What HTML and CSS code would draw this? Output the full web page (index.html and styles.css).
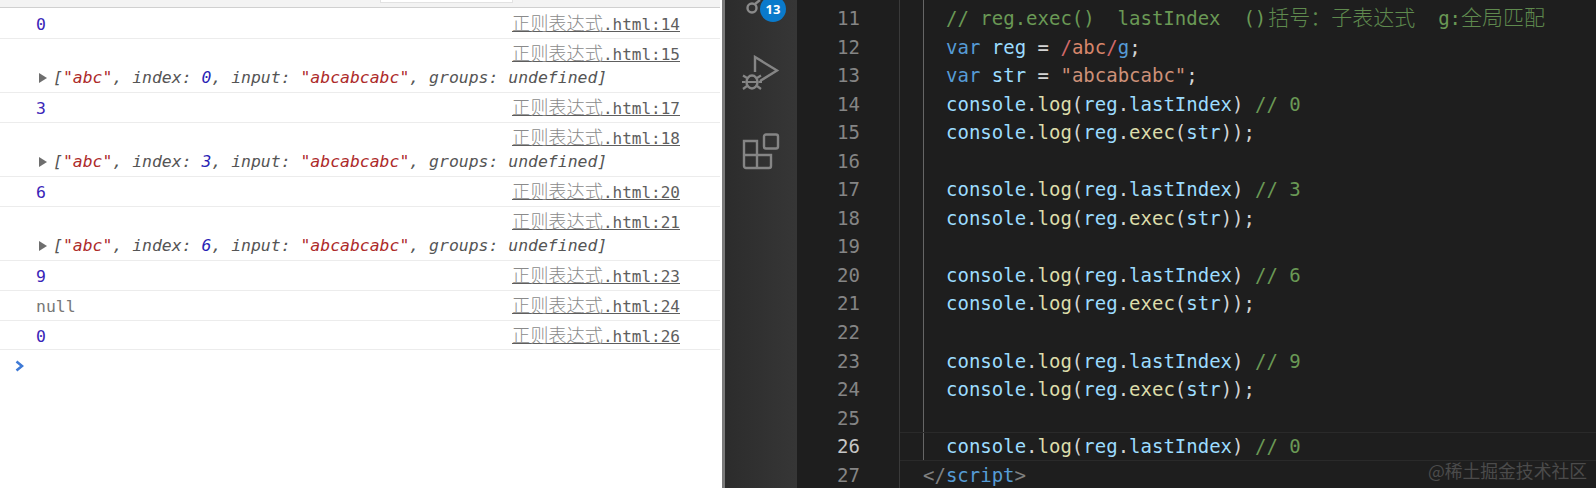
FILE: index.html
```html
<!DOCTYPE html>
<html lang="zh">
<head>
<meta charset="utf-8">
<title>正则表达式</title>
<link rel="stylesheet" href="styles.css">
</head>
<body>
<div class="app">
  <section class="console">
    <div class="toolbar"><div class="tab-edge"></div></div>
    <div class="row"><div class="line"><span class="num">0</span><a class="src"><span class="cjk">正则表达式</span>.html:14</a></div></div>
    <div class="row double">
      <div class="line end"><a class="src"><span class="cjk">正则表达式</span>.html:15</a></div>
      <div class="obj"><span class="tri"></span><i>[<b class="s">"abc"</b>, index: <b class="n">0</b>, input: <b class="s">"abcabcabc"</b>, groups: undefined]</i></div>
    </div>
    <div class="row"><div class="line"><span class="num">3</span><a class="src"><span class="cjk">正则表达式</span>.html:17</a></div></div>
    <div class="row double">
      <div class="line end"><a class="src"><span class="cjk">正则表达式</span>.html:18</a></div>
      <div class="obj"><span class="tri"></span><i>[<b class="s">"abc"</b>, index: <b class="n">3</b>, input: <b class="s">"abcabcabc"</b>, groups: undefined]</i></div>
    </div>
    <div class="row"><div class="line"><span class="num">6</span><a class="src"><span class="cjk">正则表达式</span>.html:20</a></div></div>
    <div class="row double">
      <div class="line end"><a class="src"><span class="cjk">正则表达式</span>.html:21</a></div>
      <div class="obj"><span class="tri"></span><i>[<b class="s">"abc"</b>, index: <b class="n">6</b>, input: <b class="s">"abcabcabc"</b>, groups: undefined]</i></div>
    </div>
    <div class="row"><div class="line"><span class="num">9</span><a class="src"><span class="cjk">正则表达式</span>.html:23</a></div></div>
    <div class="row"><div class="line"><span class="null">null</span><a class="src"><span class="cjk">正则表达式</span>.html:24</a></div></div>
    <div class="row last"><div class="line"><span class="num">0</span><a class="src"><span class="cjk">正则表达式</span>.html:26</a></div></div>
    <div class="prompt">
      <svg width="9" height="12" viewBox="0 0 9 12"><path d="M1.500 1.500 7 6l-5.500 4.500" fill="none" stroke="#3f7ad6" stroke-width="2.600"/></svg>
    </div>
  </section>
  <div class="divider"></div>
  <nav class="activity">
    <svg class="ic-scm" width="30" height="16" viewBox="0 0 30 16"><circle cx="9" cy="8" r="4.500" fill="none" stroke="#8a8a8a" stroke-width="2.400"/><path d="M12 4 17 0" stroke="#8a8a8a" stroke-width="2.400" fill="none"/></svg>
    <span class="badge">13</span>
    <svg class="ic-debug" width="38" height="38" viewBox="0 0 38 38">
      <path d="M13 17V2l22 13.500L18 26" fill="none" stroke="#858585" stroke-width="2.400" stroke-linejoin="miter"/>
      <ellipse cx="10" cy="27" rx="5.500" ry="6.500" fill="none" stroke="#858585" stroke-width="2.400"/>
      <path d="M5 23 1 20.500M15 23l4-2.500M3.500 27H0M16.500 27H20M5 31l-4 3M15 31l4 3M5 27h10" fill="none" stroke="#858585" stroke-width="2.200"/>
    </svg>
    <svg class="ic-ext" width="38" height="38" viewBox="0 0 38 38">
      <path d="M2 8h13v27H4a2 2 0 0 1-2-2zM2 22h27v11a2 2 0 0 1-2 2H15V8" fill="none" stroke="#858585" stroke-width="2.400"/>
      <rect x="22" y="1.500" width="14" height="14" rx="2" fill="none" stroke="#858585" stroke-width="2.400"/>
    </svg>
  </nav>
  <main class="editor">
    <div class="gutter">
      <div>11</div><div>12</div><div>13</div><div>14</div><div>15</div><div>16</div><div>17</div><div>18</div><div>19</div><div>20</div><div>21</div><div>22</div><div>23</div><div>24</div><div>25</div><div class="cur">26</div><div>27</div>
    </div>
    <div class="code">
      <div class="guide">
        <div class="c"><span class="cm">// reg.exec()  lastIndex  ()<span class="zh first">括号：子表达式</span>  g:<span class="zh">全局匹配</span></span></div>
        <div class="c"><span class="kw">var</span> <span class="v">reg</span> = <span class="re">/</span><span class="rb">abc</span><span class="re">/</span><span class="kw">g</span>;</div>
        <div class="c"><span class="kw">var</span> <span class="v">str</span> = <span class="st">"abcabcabc"</span>;</div>
        <div class="c"><span class="v">console</span>.<span class="fn">log</span>(<span class="v">reg</span>.<span class="v">lastIndex</span>) <span class="cm">// 0</span></div>
        <div class="c"><span class="v">console</span>.<span class="fn">log</span>(<span class="v">reg</span>.<span class="fn">exec</span>(<span class="v">str</span>));</div>
        <div class="c"></div>
        <div class="c"><span class="v">console</span>.<span class="fn">log</span>(<span class="v">reg</span>.<span class="v">lastIndex</span>) <span class="cm">// 3</span></div>
        <div class="c"><span class="v">console</span>.<span class="fn">log</span>(<span class="v">reg</span>.<span class="fn">exec</span>(<span class="v">str</span>));</div>
        <div class="c"></div>
        <div class="c"><span class="v">console</span>.<span class="fn">log</span>(<span class="v">reg</span>.<span class="v">lastIndex</span>) <span class="cm">// 6</span></div>
        <div class="c"><span class="v">console</span>.<span class="fn">log</span>(<span class="v">reg</span>.<span class="fn">exec</span>(<span class="v">str</span>));</div>
        <div class="c"></div>
        <div class="c"><span class="v">console</span>.<span class="fn">log</span>(<span class="v">reg</span>.<span class="v">lastIndex</span>) <span class="cm">// 9</span></div>
        <div class="c"><span class="v">console</span>.<span class="fn">log</span>(<span class="v">reg</span>.<span class="fn">exec</span>(<span class="v">str</span>));</div>
        <div class="c"></div>
        <div class="c active"><span class="v">console</span>.<span class="fn">log</span>(<span class="v">reg</span>.<span class="v">lastIndex</span>) <span class="cm">// 0</span></div>
      </div>
      <div class="c closing"><span class="tg">&lt;/</span><span class="kw">script</span><span class="tg">&gt;</span></div>
    </div>
    <div class="mark">@稀土掘金技术社区</div>
  </main>
</div>
</body>
</html>
```
FILE: styles.css
```css
* { box-sizing: border-box; }
html, body { margin: 0; height: 488px; overflow: hidden; background: #fff; }
.app { display: flex; width: 1596px; height: 488px; }

/* console */
.console {
  width: 722px;
  flex: none;
  background: #fff;
  padding-right: 2px;
  font: 16.450px/23px "DejaVu Sans Mono", monospace;
  color: #555;
}
.toolbar {
  height: 8px;
  background: #f3f3f3;
  border-bottom: 1px solid #d0d0d0;
  padding-left: 380px;
}
.tab-edge { width: 133px; height: 3px; background: #fff; border: 1px solid #e2e2e2; border-top: 0; }
.row { padding: 3px 0 3px 36px; border-bottom: 1px solid #ececec; }
.toolbar + .row { padding-top: 4px; }
.row.last { padding-bottom: 2px; }
.row.double { display: flex; flex-direction: column; gap: 1px; }
.line { display: flex; justify-content: space-between; padding-right: 40px; height: 23px; }
.line.end { justify-content: flex-end; }
.num { color: #3a25b8; margin-top: 1px; }
.null { color: #777; margin-top: 1px; }
.src { color: #5e5e5e; text-decoration: underline; font-size: 16px; margin-top: -1px; }
.cjk { font-family: "Noto Sans CJK SC", sans-serif; font-size: 18.200px; color: #8a8a8a; font-weight: 300; }
.obj { display: flex; align-items: center; height: 23px; margin-left: 3px; }
.obj i { font-style: italic; color: #555; margin-left: 6px; }
.obj b { font-weight: normal; }
.s { color: #ad2a2a; }
.n { color: #2a1fb5; }
.tri { width: 0; height: 0; border-left: 8px solid #6e6e6e; border-top: 5.500px solid transparent; border-bottom: 5.500px solid transparent; }
.prompt { padding: 10px 0 0 15px; line-height: 0; }

/* divider + activity bar */
.divider { width: 3px; flex: none; background: #7a7a7a; }
.activity {
  width: 72px;
  flex: none;
  position: relative;
  background: linear-gradient(90deg, #2c2c2c, #363636);
}
.ic-scm { position: absolute; left: 18px; top: 0; }
.badge {
  position: absolute; left: 35px; top: -4px;
  width: 26px; height: 26px; border-radius: 50%;
  background: #0a7acb; color: #fff;
  font: 700 13px/26px "Open Sans", sans-serif; text-align: center;
}
.ic-debug { position: absolute; left: 17px; top: 55px; }
.ic-ext { position: absolute; left: 17px; top: 133px; }

/* editor */
.editor {
  flex: 1;
  position: relative;
  display: flex;
  background: #1e1e1e;
  font: 19px/28.550px "DejaVu Sans Mono", monospace;
  color: #d4d4d4;
  overflow: hidden;
}
.gutter {
  width: 103px;
  flex: none;
  padding: 4px 39px 0 0;
  text-align: right;
  color: #858585;
  border-right: 1px solid #3a3a3a;
}
.gutter .cur { color: #c6c6c6; }
.code { flex: 1; padding-left: 23px; }
.guide { border-left: 1px solid #666; padding: 4px 0 0 22px; }
.c { height: 28.550px; white-space: pre; }
.active { margin-left: -46px; padding-left: 46px; box-shadow: inset 0 1px #2a2a2a, inset 0 -1px #2a2a2a; }
.closing { color: #808080; }
.cm { color: #6a9955; }
.zh { font-family: "Noto Sans CJK SC", sans-serif; font-size: 21px; color: #5f8a4e; font-weight: 300; line-height: 1; }
.zh.first { margin-left: 2px; }
.kw { color: #569cd6; }
.v { color: #9cdcfe; }
.fn { color: #dcdcaa; }
.st { color: #ce9178; }
.re { color: #d16969; }
.rb { color: #d7866b; }
.tg { color: #808080; }
.mark {
  position: absolute; right: 9px; bottom: 7px;
  font: 17.800px/22px "Noto Sans CJK SC", sans-serif;
  color: #4b4b4b;
}
```
